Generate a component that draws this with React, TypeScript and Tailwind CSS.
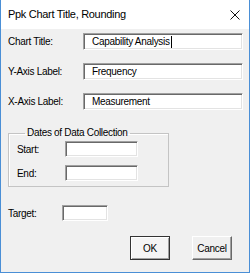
import React from "react";

const font = { fontFamily: '"Segoe UI", "Liberation Sans", Arial, sans-serif' };

function TextBox({ value, caret, className }: { value?: string; caret?: boolean; className: string }) {
  return (
    <div
      className={`bg-white border border-t-[#a0a0a0] border-l-[#a0a0a0] border-r-white border-b-white shadow-[inset_1px_1px_0_#696969,inset_-1px_-1px_0_#e3e3e3] flex items-center pl-[8px] text-[10px] tracking-[-0.3px] text-black leading-none ${className}`}
    >
      {value}
      {caret && <span className="w-[1px] h-[12px] bg-black ml-[1px]" />}
    </div>
  );
}

function Row({ label, value, caret, top }: { label: string; value: string; caret?: boolean; top: string }) {
  return (
    <div className={`flex items-center ${top}`}>
      <span className="w-[75px] text-[10px] tracking-[-0.3px]">{label}</span>
      <TextBox value={value} caret={caret} className="w-[160px] h-[17px]" />
    </div>
  );
}

export default function App() {
  return (
    <div
      className="w-[250px] h-[273px] border border-t-0 border-[#4a8fd6] bg-[#f0f0f0] flex flex-col text-black"
      style={font}
    >
      <div className="h-[29px] bg-white flex items-center justify-between pl-[7px] pr-[8px] shrink-0">
        <span className="text-[11px] tracking-[-0.3px]">Ppk Chart Title, Rounding</span>
        <svg width="10" height="10" viewBox="0 0 10 10" className="mr-[1px]">
          <path d="M0.5 0.5 L9.5 9.5 M9.5 0.5 L0.5 9.5" stroke="#111" strokeWidth="1" />
        </svg>
      </div>

      <div className="pl-[7px]">
        <Row label="Chart Title:" value="Capability Analysis" caret top="mt-[4px]" />
        <Row label="Y-Axis Label:" value="Frequency" top="mt-[13px]" />
        <Row label="X-Axis Label:" value="Measurement" top="mt-[13px]" />

        <fieldset className="mt-[15px] w-[161px] h-[62px] border border-[#c4c4c4] shadow-[inset_1px_1px_0_#fff] pl-[8px]">
          <legend className="ml-[8px] px-[2px] text-[10px] tracking-[-0.3px] leading-[16px]">Dates of Data Collection</legend>
          <div className="flex items-center">
            <span className="w-[48px] text-[10px] tracking-[-0.3px]">Start:</span>
            <TextBox className="w-[73px] h-[16px]" />
          </div>
          <div className="flex items-center mt-[8px]">
            <span className="w-[48px] text-[10px] tracking-[-0.3px]">End:</span>
            <TextBox className="w-[73px] h-[16px]" />
          </div>
        </fieldset>

        <div className="flex items-center mt-[18px]">
          <span className="w-[54px] text-[10px] tracking-[-0.3px]">Target:</span>
          <TextBox className="w-[46px] h-[16px]" />
        </div>

        <div className="flex mt-[15px] pl-[122px] gap-[22px]">
          <button className="w-[40px] h-[24px] border border-[#333] bg-[#f4f4f4] shadow-[inset_1px_1px_0_#fff,inset_-1px_-1px_0_#a0a0a0] text-[10px] tracking-[-0.3px]">
            OK
          </button>
          <button className="w-[40px] h-[24px] border border-t-white border-l-white border-r-[#696969] border-b-[#696969] bg-[#f0f0f0] shadow-[inset_-1px_-1px_0_#a0a0a0] text-[10px] tracking-[-0.3px]">
            Cancel
          </button>
        </div>
      </div>
    </div>
  );
}
